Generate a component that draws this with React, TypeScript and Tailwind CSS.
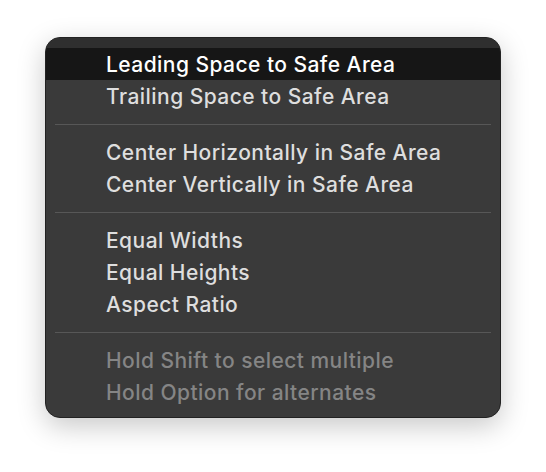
import React from "react";

type Item =
  | { kind: "item"; label: string; active?: boolean; disabled?: boolean }
  | { kind: "sep" };

const items: Item[] = [
  { kind: "item", label: "Leading Space to Safe Area", active: true },
  { kind: "item", label: "Trailing Space to Safe Area" },
  { kind: "sep" },
  { kind: "item", label: "Center Horizontally in Safe Area" },
  { kind: "item", label: "Center Vertically in Safe Area" },
  { kind: "sep" },
  { kind: "item", label: "Equal Widths" },
  { kind: "item", label: "Equal Heights" },
  { kind: "item", label: "Aspect Ratio" },
  { kind: "sep" },
  { kind: "item", label: "Hold Shift to select multiple", disabled: true },
  { kind: "item", label: "Hold Option for alternates", disabled: true },
];

export default function App() {
  return (
    <div className="w-[546px] h-[472px] bg-white pt-[37px] pl-[45px] font-['Inter','Noto_Sans',sans-serif]">
      <div className="w-[456px] rounded-[15px] overflow-hidden bg-[#3a3a3a] border border-[#222] shadow-[0_8px_28px_rgba(0,0,0,0.22)] flex flex-col">
        <div className="h-[10px] bg-[#2f2f2f]" />
        {items.map((it, i) =>
          it.kind === "sep" ? (
            <div key={i} className="h-6 flex items-center px-[9px]">
              <div className="h-px w-full bg-[#575757]" />
            </div>
          ) : (
            <div
              key={i}
              className={
                "h-8 flex items-center pl-[60px] pt-px text-[21px] font-[450] tracking-[0.45px] " +
                (it.active
                  ? "bg-[#161616] text-white"
                  : it.disabled
                  ? "text-[#858585]"
                  : "text-[#dedede]")
              }
            >
              {it.label}
            </div>
          )
        )}
        <div className="h-[9px]" />
      </div>
    </div>
  );
}
